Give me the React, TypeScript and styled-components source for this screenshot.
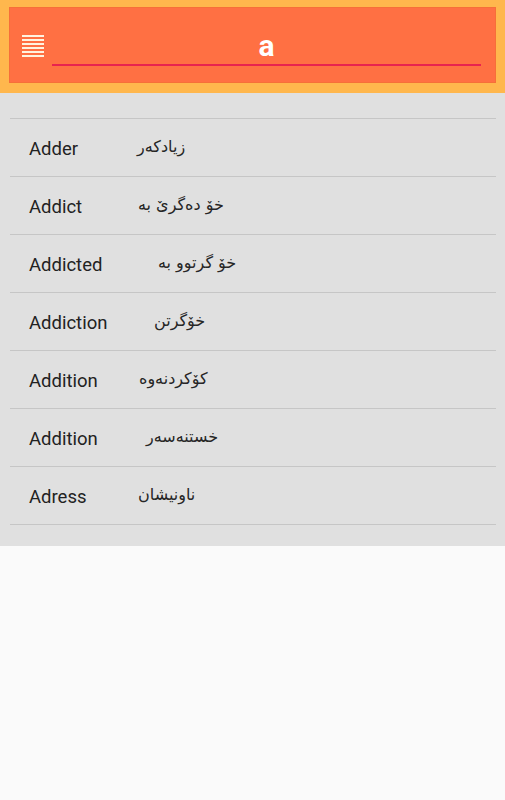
import React from "react";
import styled, { createGlobalStyle } from "styled-components";

const Global = createGlobalStyle`
  html, body { margin: 0; padding: 0; background: #fafafa; }
  body { font-family: Roboto, "Noto Sans", "DejaVu Sans", sans-serif; }
`;

const Page = styled.div`
  width: 505px;
  min-height: 800px;
  background: #fafafa;
`;

const Header = styled.header`
  background: #ffb74d;
  padding: 7px 9px 10px;
  height: 93px;
  box-sizing: border-box;
`;

const Bar = styled.div`
  background: #ff7043;
  height: 76px;
  box-sizing: border-box;
  display: flex;
  align-items: flex-start;
  padding: 0 15px 0 13px;
  box-shadow: inset 0 0 0 1px rgba(230, 110, 40, 0.35);
`;

const Menu = styled.div`
  width: 22px;
  margin-top: 28px;
  display: flex;
  flex-direction: column;
  gap: 2px;
  flex-shrink: 0;
`;

const MenuLine = styled.span`
  display: block;
  height: 2px;
  background: #fff3e0;
`;

const Search = styled.div`
  flex: 1;
  margin-left: 8px;
  height: 59px;
  box-sizing: border-box;
  border-bottom: 2px solid #e8234f;
  display: flex;
  align-items: flex-end;
  justify-content: center;
  padding-bottom: 3px;
  color: #fff;
  font-family: Roboto, "Noto Sans", sans-serif;
  font-weight: 700;
  font-size: 30px;
  line-height: 30px;
`;

const Results = styled.section`
  background: #e0e0e0;
  padding: 25px 9px 21px 10px;
`;

const List = styled.ul`
  list-style: none;
  margin: 0;
  padding: 0;
  border-top: 1px solid #c6c6c6;
`;

const Row = styled.li`
  height: 58px;
  box-sizing: border-box;
  border-bottom: 1px solid #c6c6c6;
  display: grid;
  grid-template-columns: 108px 1fr;
  align-items: center;
  padding-left: 19px;
`;

const English = styled.span`
  font-family: Roboto, "Noto Sans", sans-serif;
  font-size: 18.5px;
  color: #222;
  padding-top: 3px;
`;

const Kurdish = styled.span<{ $shift: number }>`
  font-family: "DejaVu Sans", "Noto Sans", sans-serif;
  font-size: 16px;
  color: #262626;
  padding-left: ${(p) => p.$shift}px;
  padding-bottom: 2px;
  justify-self: start;
`;

const words: { en: string; ku: string; shift: number }[] = [
  { en: "Adder", ku: "زیادکەر", shift: 0 },
  { en: "Addict", ku: "خۆ دەگرێ بە", shift: 1 },
  { en: "Addicted", ku: "خۆ گرتوو بە", shift: 21 },
  { en: "Addiction", ku: "خۆگرتن", shift: 17 },
  { en: "Addition", ku: "کۆکردنەوە", shift: 2 },
  { en: "Addition", ku: "خستنەسەر", shift: 9 },
  { en: "Adress", ku: "ناونیشان", shift: 1 },
];

export default function App() {
  return (
    <Page>
      <Global />
      <Header>
        <Bar>
          <Menu>
            {[0, 1, 2, 3, 4, 5].map((i) => (
              <MenuLine key={i} />
            ))}
          </Menu>
          <Search>a</Search>
        </Bar>
      </Header>
      <Results>
        <List>
          {words.map((w, i) => (
            <Row key={i}>
              <English>{w.en}</English>
              <Kurdish $shift={w.shift} dir="rtl">
                {w.ku}
              </Kurdish>
            </Row>
          ))}
        </List>
      </Results>
    </Page>
  );
}
